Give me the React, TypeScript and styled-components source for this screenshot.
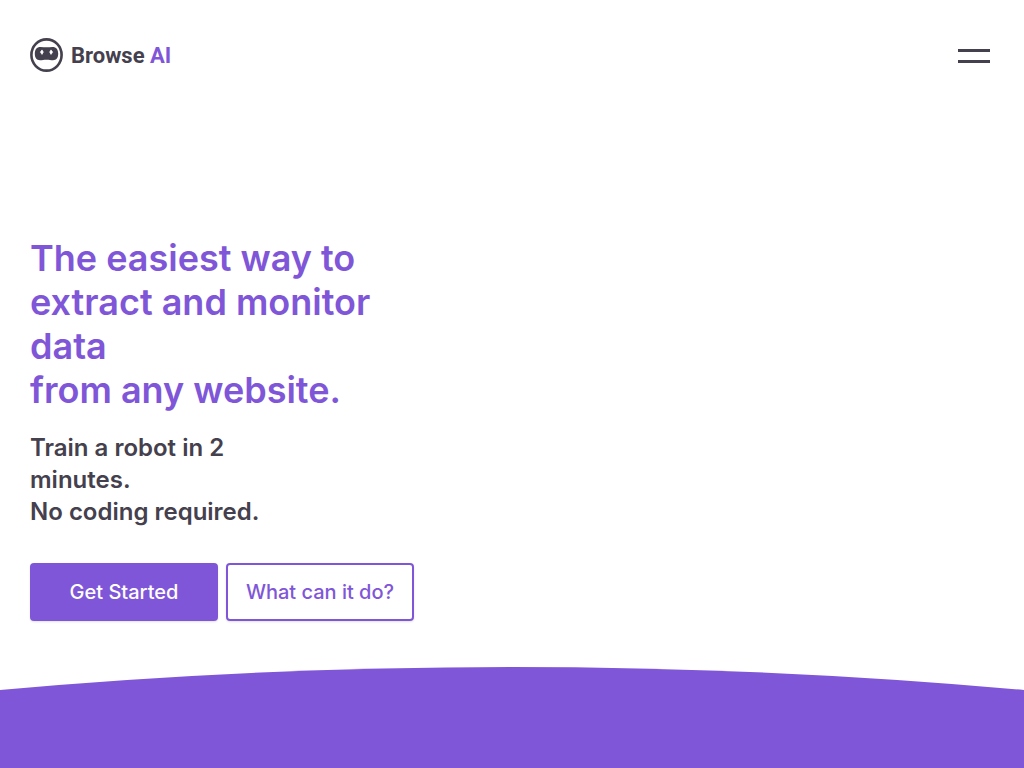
import React from "react";
import styled, { createGlobalStyle } from "styled-components";

const purple = "#8056d9";
const ink = "#45404d";

const GlobalStyle = createGlobalStyle`
  *, *::before, *::after { box-sizing: border-box; }
  body {
    margin: 0;
    background: #fff;
    color: ${ink};
    font-family: Inter, "Liberation Sans", sans-serif;
  }
`;

const Page = styled.div`
  display: flex;
  flex-direction: column;
  min-height: 100vh;
`;

const Header = styled.header`
  display: flex;
  align-items: center;
  justify-content: space-between;
  padding: 36px 30px;
`;

const Brand = styled.a`
  display: flex;
  align-items: center;
  gap: 8px;
  height: 38px;
  color: ${ink};
  text-decoration: none;
  font: 700 22px/40px Roboto, "Liberation Sans", sans-serif;
`;

const BrandName = styled.span`
  padding-top: 2px;
`;

const BrandAccent = styled.span`
  color: ${purple};
`;

const MenuButton = styled.button`
  display: flex;
  flex-direction: column;
  gap: 8px;
  padding: 12px 4px 10px;
  border: 0;
  background: none;
  cursor: pointer;
`;

const MenuBar = styled.span`
  width: 32px;
  height: 3px;
  background: ${ink};
`;

const Hero = styled.main`
  padding: 126px 30px 46px;
`;

const Title = styled.h1`
  max-width: 384px;
  margin: 0 0 20px;
  color: ${purple};
  font-size: 36px;
  font-weight: 600;
  line-height: 44px;
`;

const Subtitle = styled.p`
  max-width: 240px;
  margin: 0 0 35px;
  font-size: 24px;
  font-weight: 600;
  line-height: 32px;
`;

const Actions = styled.div`
  display: flex;
  flex-wrap: wrap;
  gap: 8px;
`;

const ActionButton = styled.button<{ $filled?: boolean }>`
  width: 188px;
  height: 58px;
  padding: 0;
  border: 2px solid ${purple};
  border-radius: 4px;
  background: ${(p) => (p.$filled ? purple : "#fff")};
  color: ${(p) => (p.$filled ? "#fff" : purple)};
  box-shadow: 0 1px 2px rgba(69, 64, 77, 0.15);
  font: 500 20px/28px Inter, "Liberation Sans", sans-serif;
  white-space: nowrap;
  cursor: pointer;
`;

const Band = styled.section`
  display: flex;
  flex: 1;
  flex-direction: column;
`;

const Curve = styled.svg`
  display: block;
  width: 100%;
  height: 24px;
`;

const BandFill = styled.div`
  flex: 1;
  min-height: 77px;
  background: ${purple};
`;

function RobotMark() {
  return (
    <svg width="33" height="34" viewBox="0 0 33 34" aria-hidden="true">
      <ellipse cx="16.5" cy="17" rx="15.1" ry="15.6" fill="none" stroke={ink} strokeWidth="2.6" />
      <path
        d="M10.6 8.9C12.6 8.9 14.3 9.2 16.5 9.2S20.4 8.9 22.4 8.9C26.4 8.9 28.2 11.6 28.2 15.5C28.2 20 26.4 22.2 23 22.2C21 22.2 19 21.7 16.5 21.7S12 22.2 10 22.2C6.6 22.2 4.8 20 4.8 15.5C4.8 11.6 6.6 8.9 10.6 8.9Z"
        fill={ink}
      />
      <path
        d="M12 11.9L13.3 14.1L12 16.4L10.4 14.1Z M21 11.9L22.6 14.1L21 16.4L19.7 14.1Z"
        fill="#fff"
        stroke="#fff"
        strokeWidth=".7"
        strokeLinejoin="round"
      />
    </svg>
  );
}

export default function App() {
  return (
    <Page>
      <GlobalStyle />
      <Header>
        <Brand href="#">
          <RobotMark />
          <BrandName>
            Browse <BrandAccent>AI</BrandAccent>
          </BrandName>
        </Brand>
        <MenuButton type="button" aria-label="Open menu">
          <MenuBar />
          <MenuBar />
        </MenuButton>
      </Header>
      <Hero>
        <Title>
          The easiest way to extract and monitor data
          <br />
          from any website.
        </Title>
        <Subtitle>
          Train a robot in 2 minutes.
          <br />
          No coding required.
        </Subtitle>
        <Actions>
          <ActionButton type="button" $filled>
            Get Started
          </ActionButton>
          <ActionButton type="button">What can it do?</ActionButton>
        </Actions>
      </Hero>
      <Band>
        <Curve viewBox="0 0 1024 24" preserveAspectRatio="none" aria-hidden="true">
          <path d="M0 23Q512 -23 1024 23V24H0Z" fill={purple} />
        </Curve>
        <BandFill />
      </Band>
    </Page>
  );
}
